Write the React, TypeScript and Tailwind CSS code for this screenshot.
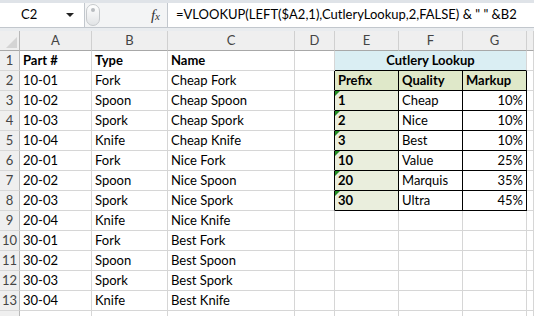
import type { ReactNode } from "react";

const parts = [
  ["10-01", "Fork", "Cheap Fork"],
  ["10-02", "Spoon", "Cheap Spoon"],
  ["10-03", "Spork", "Cheap Spork"],
  ["10-04", "Knife", "Cheap Knife"],
  ["20-01", "Fork", "Nice Fork"],
  ["20-02", "Spoon", "Nice Spoon"],
  ["20-03", "Spork", "Nice Spork"],
  ["20-04", "Knife", "Nice Knife"],
  ["30-01", "Fork", "Best Fork"],
  ["30-02", "Spoon", "Best Spoon"],
  ["30-03", "Spork", "Best Spork"],
  ["30-04", "Knife", "Best Knife"],
];

const lookup = [
  ["1", "Cheap", "10%"],
  ["2", "Nice", "10%"],
  ["3", "Best", "10%"],
  ["10", "Value", "25%"],
  ["20", "Marquis", "35%"],
  ["30", "Ultra", "45%"],
];

const cols = ["A", "B", "C", "D", "E", "F", "G", ""];

function Cell({
  children,
  className = "",
}: {
  children?: ReactNode;
  className?: string;
}) {
  return (
    <div
      className={`relative h-[20px] flex items-end px-[3px] pb-[1px] leading-[18px] border-r border-b whitespace-nowrap overflow-visible ${className}`}
    >
      {children}
    </div>
  );
}

function RowHead({ n }: { n?: number }) {
  return (
    <div className="h-[20px] flex items-end justify-center pb-[1px] leading-[18px] bg-[#efefef] border-r border-b border-r-[#b8b8b8] border-b-[#d8d8d8] text-[#444]">
      {n}
    </div>
  );
}

function Flag() {
  return (
    <span className="absolute left-0 top-0 w-0 h-0 border-t-[5px] border-r-[5px] border-t-[#1f8a1f] border-r-transparent" />
  );
}

const grid = "border-[#d6d6d6]";

export default function App() {
  return (
    <div
      className="w-[534px] h-[316px] overflow-hidden bg-white text-[13px] text-black"
      style={{ fontFamily: "Lato, 'Liberation Sans', sans-serif" }}
    >
      {/* Formula bar */}
      <div className="h-[31px] bg-[#e9ecef] flex flex-col">
        <div className="h-[3px] bg-[#dfe3e8]" />
        <div className="h-[25px] flex items-stretch">
          <div className="w-[85px] bg-white border-r border-b border-[#c2c7cd] flex items-center pl-[21px] pr-[10px] justify-between">
            <span>C2</span>
            <span className="w-0 h-0 border-l-[4px] border-r-[4px] border-t-[4px] border-l-transparent border-r-transparent border-t-[#222]" />
          </div>
          <div className="w-[82px] bg-[#f3f4f5] flex items-center border-b border-[#c2c7cd]">
            <div className="ml-[1px] w-[14px] h-[22px] rounded-full border border-[#c6c9cc] bg-gradient-to-b from-white to-[#e2e4e6] flex justify-center pt-[3px]">
              <span className="w-[4px] h-[4px] rounded-full bg-[#b9bcc0]" />
            </div>
            <span
              className="ml-auto mr-[7px] italic text-[15px] text-[#333]"
              style={{ fontFamily: "'Liberation Serif', serif" }}
            >
              f<span className="text-[11px]">x</span>
            </span>
          </div>
          <div className="flex-1 bg-white border-l border-b border-[#c2c7cd] flex items-center pl-[8px] whitespace-nowrap overflow-hidden">
            =VLOOKUP(LEFT($A2,1),CutleryLookup,2,FALSE) &amp; " " &amp;B2
          </div>
        </div>
      </div>

      {/* Sheet */}
      <div className="grid grid-cols-[20px_72px_76px_127px_40px_64px_64px_64px_1fr] auto-rows-[20px]">
        {/* column headers */}
        <div className="h-[20px] bg-[#efefef] border-r border-b border-r-[#b8b8b8] border-b-[#a8a8a8] relative">
          <span className="absolute right-[2px] bottom-[2px] w-0 h-0 border-l-[11px] border-b-[11px] border-l-transparent border-b-[#d4d4d4]" />
        </div>
        {cols.map((c, i) => (
          <div
            key={i}
            className="h-[20px] flex items-end justify-center pb-[1px] leading-[18px] bg-[#efefef] border-r border-b border-r-[#d0d0d0] border-b-[#a8a8a8] text-[#444]"
          >
            {c}
          </div>
        ))}

        {/* row 1 */}
        <RowHead n={1} />
        <Cell className={`${grid} font-bold`}>Part #</Cell>
        <Cell className={`${grid} font-bold`}>Type</Cell>
        <Cell className={`${grid} font-bold`}>Name</Cell>
        <Cell className={grid} />
        <Cell className="col-span-3 justify-center font-bold bg-[#daeef3] border-r-[#d6d6d6] border-b-black">
          Cutlery Lookup
        </Cell>
        <Cell className={grid} />

        {parts.map((p, i) => {
          const r = i + 2;
          const inTable = r <= 8;
          const dEdge = inTable ? "border-b-[#d6d6d6] border-r-black" : grid;
          const t = "border-black";
          let e: ReactNode, f: ReactNode, g: ReactNode;
          if (r === 2) {
            e = <Cell className={`${t} font-bold bg-[#dfe8c9]`}>Prefix</Cell>;
            f = <Cell className={`${t} font-bold bg-[#dfe8c9]`}>Quality</Cell>;
            g = <Cell className={`${t} font-bold bg-[#dfe8c9]`}>Markup</Cell>;
          } else if (inTable) {
            const l = lookup[r - 3];
            e = (
              <Cell className={`${t} font-bold bg-[#eaeedd]`}>
                <Flag />
                {l[0]}
              </Cell>
            );
            f = <Cell className={t}>{l[1]}</Cell>;
            g = <Cell className={`${t} justify-end`}>{l[2]}</Cell>;
          } else {
            e = <Cell className={grid} />;
            f = <Cell className={grid} />;
            g = <Cell className={grid} />;
          }
          return [
            <RowHead key={`h${r}`} n={r} />,
            <Cell key={`a${r}`} className={grid}>{p[0]}</Cell>,
            <Cell key={`b${r}`} className={grid}>{p[1]}</Cell>,
            <Cell key={`c${r}`} className={grid}>{p[2]}</Cell>,
            <Cell key={`d${r}`} className={dEdge} />,
            <div key={`e${r}`} className="contents">{e}</div>,
            <div key={`f${r}`} className="contents">{f}</div>,
            <div key={`g${r}`} className="contents">{g}</div>,
            <Cell key={`x${r}`} className={grid} />,
          ];
        })}

        {/* row 14, only its top edge shows */}
        <RowHead />
        {cols.map((_, i) => (
          <Cell key={i} className={grid} />
        ))}
      </div>
    </div>
  );
}
